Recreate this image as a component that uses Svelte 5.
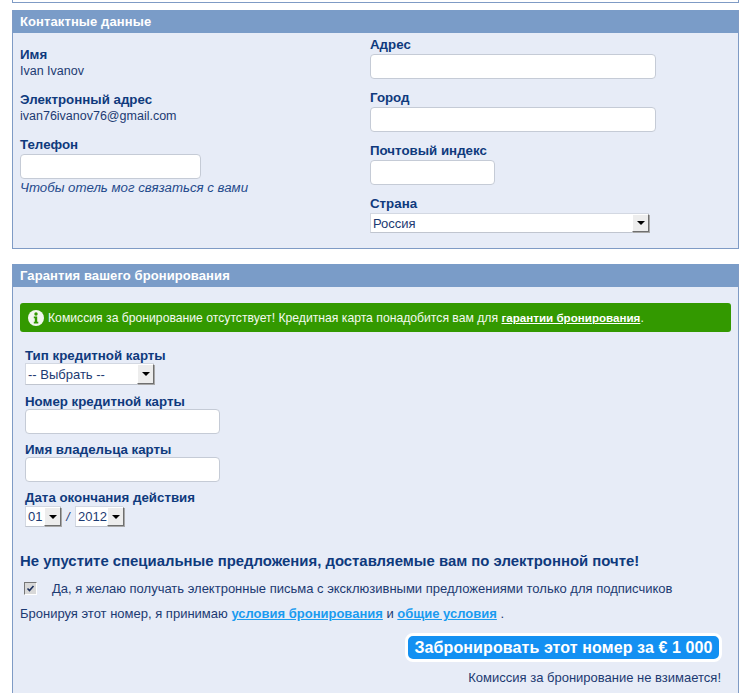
<script lang="ts">
	const leftInfo = [
		{ label: 'Имя', value: 'Ivan Ivanov' },
		{ label: 'Электронный адрес', value: 'ivan76ivanov76@gmail.com' }
	];
	const addressFields = [
		{ label: 'Адрес', size: 'wide' },
		{ label: 'Город', size: 'wide' },
		{ label: 'Почтовый индекс', size: 'short' }
	];
</script>

<div class="page">
	<div class="top-strip"></div>

	<section class="panel contact">
		<h2>Контактные данные</h2>
		<div class="columns">
			<div class="col-left">
				{#each leftInfo as item}
					<div class="info">
						<div class="label">{item.label}</div>
						<div class="value">{item.value}</div>
					</div>
				{/each}
				<div class="label">Телефон</div>
				<input class="field phone" type="text" />
				<div class="hint">Чтобы отель мог связаться с вами</div>
			</div>
			<div class="col-right">
				{#each addressFields as f}
					<div class="group">
						<div class="label">{f.label}</div>
						<input class="field {f.size}" type="text" />
					</div>
				{/each}
				<div class="label">Страна</div>
				<div class="select country">
					<span class="sel-text">Россия</span>
					<span class="arrow"></span>
				</div>
			</div>
		</div>
	</section>

	<section class="panel guarantee">
		<h2>Гарантия вашего бронирования</h2>
		<div class="body">
			<div class="alert">
				<svg width="16" height="16" viewBox="0 0 16 16" aria-hidden="true">
					<circle cx="8" cy="8" r="8" fill="#f2f7ee" />
					<circle cx="8" cy="4" r="1.7" fill="#339900" />
					<path d="M5.8 6.6h3.4v5.2h1.1v1.6H5.8v-1.6h1v-3.6h-1z" fill="#339900" />
				</svg>
				<span>Комиссия за бронирование отсутствует! Кредитная карта понадобится вам для <a href="#g">гарантии бронирования</a>.</span>
			</div>

			<div class="card">
				<div class="label">Тип кредитной карты</div>
				<div class="select card-type">
					<span class="sel-text">-- Выбрать --</span>
					<span class="arrow"></span>
				</div>
				<div class="label">Номер кредитной карты</div>
				<input class="field card-input" type="text" />
				<div class="label">Имя владельца карты</div>
				<input class="field card-input" type="text" />
				<div class="label">Дата окончания действия</div>
				<div class="expiry">
					<div class="select month">
						<span class="sel-text">01</span>
						<span class="arrow"></span>
					</div>
					<span class="slash">/</span>
					<div class="select year">
						<span class="sel-text">2012</span>
						<span class="arrow"></span>
					</div>
				</div>
			</div>

			<h3>Не упустите специальные предложения, доставляемые вам по электронной почте!</h3>
			<div class="optin">
				<span class="check">
					<svg width="9" height="9" viewBox="0 0 9 9" aria-hidden="true">
						<path d="M1.5 4.5l2 2 4-4.5" fill="none" stroke="#1c2f5c" stroke-width="1.6" />
					</svg>
				</span>
				<span>Да, я желаю получать электронные письма с эксклюзивными предложениями только для подписчиков</span>
			</div>
			<p class="terms">Бронируя этот номер, я принимаю <a href="#t">условия бронирования</a> и <a href="#o">общие условия</a> .</p>
			<div class="submit-row">
				<button type="button" class="submit">Забронировать этот номер за € 1 000</button>
			</div>
			<p class="note">Комиссия за бронирование не взимается!</p>
		</div>
	</section>
</div>

<style>
	:global(body) {
		margin: 0;
		background: #fff;
	}

	.page {
		width: 740px;
		height: 693px;
		overflow: hidden;
		padding: 0 1px 0 12px;
		box-sizing: border-box;
		font-family: "Liberation Sans", Arial, sans-serif;
		font-size: 12.5px;
		color: #1c3a72;
	}

	.top-strip {
		height: 2px;
		border-bottom: 1px solid #7f9bc5;
		border-left: 1px solid #7f9bc5;
		border-right: 1px solid #7f9bc5;
		margin-bottom: 7px;
	}

	.panel {
		background: #e7ecf7;
		border: 1px solid #7f9bc5;
		border-top: 0;
	}

	h2 {
		margin: 0;
		height: 23px;
		line-height: 24px;
		padding-left: 7px;
		background: #7a9cc8;
		color: #fff;
		font-size: 13px;
		font-weight: bold;
		letter-spacing: 0.1px;
	}

	.contact {
		height: 239px;
		box-sizing: border-box;
		margin-bottom: 15px;
	}

	.columns {
		display: flex;
	}

	.col-left {
		width: 350px;
		padding: 14px 0 0 7px;
		box-sizing: border-box;
	}

	.col-right {
		padding-top: 4px;
		margin-left: 7px;
	}

	.label {
		font-size: 13.3px;
		font-weight: bold;
		line-height: 15px;
		color: #0f3a7d;
	}

	.value {
		line-height: 16px;
		margin-top: 1px;
	}

	.info {
		margin-bottom: 13px;
	}

	.group {
		margin-bottom: 11px;
	}

	.field {
		display: block;
		height: 25px;
		box-sizing: border-box;
		margin: 2px 0 0;
		padding: 0 4px;
		background: #fff;
		border: 1px solid #c5cbd6;
		border-radius: 4px;
		outline: none;
	}

	.phone {
		width: 181px;
	}

	.wide {
		width: 286px;
	}

	.short {
		width: 125px;
	}

	.hint {
		font-size: 13.25px;
		font-style: italic;
		line-height: 16px;
		margin-top: 1px;
		color: #1f4a8c;
	}

	.select {
		display: flex;
		align-items: center;
		justify-content: space-between;
		box-sizing: border-box;
		background: #fff;
		border: 1px solid #d3d8e2;
		border-right: 0;
		border-bottom-color: #c0c5cf;
		font-size: 13px;
	}

	.sel-text {
		padding-left: 2px;
		white-space: nowrap;
	}

	.arrow {
		position: relative;
		flex: none;
		width: 17px;
		height: 100%;
		box-sizing: border-box;
		background: #ededed;
		border: 1px solid;
		border-color: #fff #6f6f6f #6f6f6f #fff;
		box-shadow: 1px 1px 0 #a8a8a8;
	}

	.arrow::after {
		content: '';
		position: absolute;
		left: 4px;
		top: 50%;
		margin-top: -2px;
		border: 4px solid transparent;
		border-top: 4px solid #000;
		border-bottom: 0;
	}

	.country {
		width: 279px;
		height: 20px;
		margin-top: 2px;
	}

	.country .sel-text {
		padding-top: 1px;
	}

	.guarantee {
		height: 440px;
		border-bottom: 0;
	}

	.body {
		padding: 16px 7px 0;
	}

	.alert {
		display: flex;
		align-items: center;
		gap: 4px;
		height: 29px;
		padding-left: 8px;
		background: #339900;
		border-radius: 3px;
		color: #f4faef;
		font-size: 12.2px;
	}

	.alert a {
		color: #fff;
		font-size: 11.6px;
		font-weight: bold;
	}

	.card {
		margin: 16px 0 0 5px;
	}

	.card .label {
		margin-top: 8px;
	}

	.card .label:first-child {
		margin-top: 0;
	}

	.card .card-type + .label {
		margin-top: 9px;
	}

	.card-type {
		width: 129px;
		height: 22px;
	}

	.card-input {
		width: 195px;
		margin-top: 0;
	}

	.expiry {
		display: flex;
		align-items: center;
		margin-top: 1px;
		height: 21px;
	}

	.month,
	.year {
		height: 21px;
	}

	.month {
		width: 36px;
	}

	.year {
		width: 48px;
	}

	.slash {
		width: 14px;
		text-align: center;
		font-style: italic;
	}

	h3 {
		margin: 26px 0 0;
		font-size: 14.9px;
		line-height: 17px;
		font-weight: bold;
		color: #0f3a7d;
	}

	.optin {
		display: flex;
		align-items: center;
		margin-top: 10px;
		height: 16px;
		gap: 15px;
		padding-left: 4px;
		font-size: 13px;
	}

	.check {
		display: flex;
		align-items: center;
		justify-content: center;
		width: 13px;
		height: 13px;
		box-sizing: border-box;
		background: #d8d8d8;
		border: 1px solid;
		border-color: #777 #fff #fff #777;
	}

	.terms {
		margin: 10px 0 0;
		line-height: 16px;
		font-size: 13px;
	}

	.terms a {
		color: #1a9bf0;
		font-weight: bold;
	}

	.submit-row {
		display: flex;
		justify-content: flex-end;
		margin: 11px 9px 0 0;
	}

	.submit {
		height: 29px;
		width: 317px;
		padding: 0;
		background: #1390f2;
		border: 3px solid #fff;
		border-radius: 8px;
		color: #fff;
		font: bold 16px "Liberation Sans", Arial, sans-serif;
		letter-spacing: 0.1px;
		white-space: nowrap;
	}

	.note {
		margin: 8px 10px 0 0;
		text-align: right;
		line-height: 16px;
		font-size: 13px;
	}
</style>
